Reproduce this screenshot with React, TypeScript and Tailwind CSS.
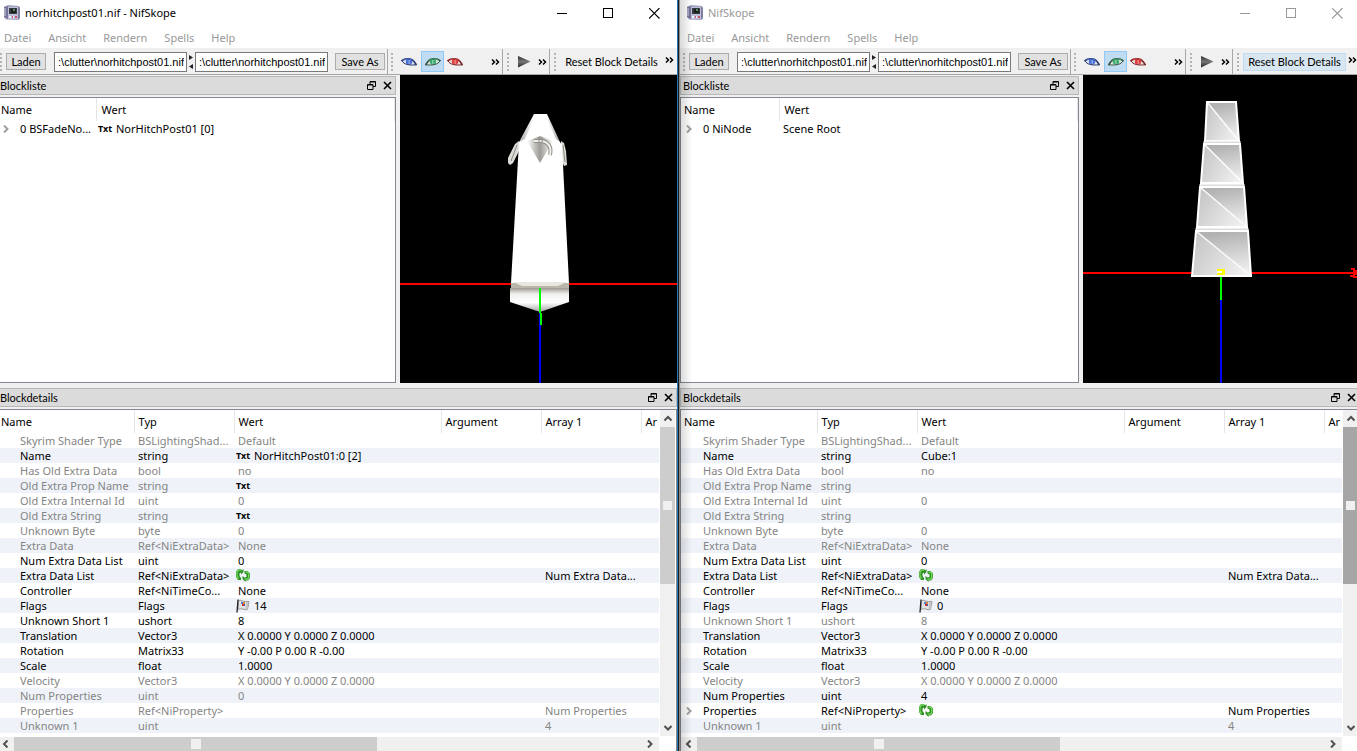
import type { ReactNode } from 'react';

interface DetailRow {
  name: string;
  type: string;
  value?: string;
  icon?: 'txt' | 'link' | 'flag';
  array?: string;
  active?: boolean;
  arrayActive?: boolean;
  expandable?: boolean;
}

interface Block {
  name: string;
  value: string;
  icon?: 'txt';
}

interface NifWindowProps {
  id: string;
  title: string;
  focused: boolean;
  block: Block;
  rows: DetailRow[];
  className: string;
  children: ReactNode;
}

const menus = ['Datei', 'Ansicht', 'Rendern', 'Spells', 'Help'];

const leftRows: DetailRow[] = [
  { name: 'Skyrim Shader Type', type: 'BSLightingShad...', value: 'Default' },
  { name: 'Name', type: 'string', value: 'NorHitchPost01:0 [2]', icon: 'txt', active: true },
  { name: 'Has Old Extra Data', type: 'bool', value: 'no' },
  { name: 'Old Extra Prop Name', type: 'string', icon: 'txt' },
  { name: 'Old Extra Internal Id', type: 'uint', value: '0' },
  { name: 'Old Extra String', type: 'string', icon: 'txt' },
  { name: 'Unknown Byte', type: 'byte', value: '0' },
  { name: 'Extra Data', type: 'Ref<NiExtraData>', value: 'None' },
  { name: 'Num Extra Data List', type: 'uint', value: '0', active: true },
  { name: 'Extra Data List', type: 'Ref<NiExtraData>', icon: 'link', array: 'Num Extra Data...', active: true, arrayActive: true },
  { name: 'Controller', type: 'Ref<NiTimeCo...', value: 'None', active: true },
  { name: 'Flags', type: 'Flags', value: '14', icon: 'flag', active: true },
  { name: 'Unknown Short 1', type: 'ushort', value: '8', active: true },
  { name: 'Translation', type: 'Vector3', value: 'X 0.0000 Y 0.0000 Z 0.0000', active: true },
  { name: 'Rotation', type: 'Matrix33', value: 'Y -0.00 P 0.00 R -0.00', active: true },
  { name: 'Scale', type: 'float', value: '1.0000', active: true },
  { name: 'Velocity', type: 'Vector3', value: 'X 0.0000 Y 0.0000 Z 0.0000' },
  { name: 'Num Properties', type: 'uint', value: '0' },
  { name: 'Properties', type: 'Ref<NiProperty>', array: 'Num Properties' },
  { name: 'Unknown 1', type: 'uint', array: '4' },
];

const rightRows: DetailRow[] = [
  { name: 'Skyrim Shader Type', type: 'BSLightingShad...', value: 'Default' },
  { name: 'Name', type: 'string', value: 'Cube:1', active: true },
  { name: 'Has Old Extra Data', type: 'bool', value: 'no' },
  { name: 'Old Extra Prop Name', type: 'string' },
  { name: 'Old Extra Internal Id', type: 'uint', value: '0' },
  { name: 'Old Extra String', type: 'string' },
  { name: 'Unknown Byte', type: 'byte', value: '0' },
  { name: 'Extra Data', type: 'Ref<NiExtraData>', value: 'None' },
  { name: 'Num Extra Data List', type: 'uint', value: '0', active: true },
  { name: 'Extra Data List', type: 'Ref<NiExtraData>', icon: 'link', array: 'Num Extra Data...', active: true, arrayActive: true },
  { name: 'Controller', type: 'Ref<NiTimeCo...', value: 'None', active: true },
  { name: 'Flags', type: 'Flags', value: '0', icon: 'flag', active: true },
  { name: 'Unknown Short 1', type: 'ushort', value: '8' },
  { name: 'Translation', type: 'Vector3', value: 'X 0.0000 Y 0.0000 Z 0.0000', active: true },
  { name: 'Rotation', type: 'Matrix33', value: 'Y -0.00 P 0.00 R -0.00', active: true },
  { name: 'Scale', type: 'float', value: '1.0000', active: true },
  { name: 'Velocity', type: 'Vector3', value: 'X 0.0000 Y 0.0000 Z 0.0000' },
  { name: 'Num Properties', type: 'uint', value: '4', active: true },
  { name: 'Properties', type: 'Ref<NiProperty>', icon: 'link', array: 'Num Properties', active: true, arrayActive: true, expandable: true },
  { name: 'Unknown 1', type: 'uint', array: '4' },
];

const AppIcon = () => (
  <svg width="16" height="16" viewBox="0 0 16 16">
    <path d="M0 2 4 0 15 1 16 3V13L14 15 2 14.500 0 12Z" fill="#a4a4c4" />
    <path d="M0 2 4 1V14L0 12Z" fill="#74749a" />
    <path d="M4 2H15V14H4Z" fill="#bebed8" />
    <path d="M15 2 16 3V13L14 15V2Z" fill="#7f7f9f" />
    <path d="M0 4h2M0 6h2M0 8h2M0 10h2" stroke="#d5d5e6" />
    <rect x="5" y="3" width="8" height="6" fill="#3a3a44" />
    <rect x="7" y="4" width="5" height="4" fill="#16231a" />
    <path d="M9 4h2v2h-2z" fill="#5d8a66" />
    <path d="M5 12h2M9 12h1" stroke="#f0f0fa" strokeWidth="2" />
    <path d="M8 12h1M11 12h2" stroke="#c9546c" strokeWidth="2" />
  </svg>
);

const Eye = ({ iris, lid, flip }: { iris: string; lid: string; flip?: boolean }) => (
  <svg width="16" height="8" viewBox="0 0 16 8" className={flip ? '-scale-x-100' : ''}>
    <path d="M0.500 3C4 0 10 0 12.500 3L15.500 7C11 7.500 6 7.500 3 5Z" fill="#e4e4e4" />
    <ellipse cx="8" cy="3.800" rx="3.200" ry="3" fill={iris} />
    <path d="M7.500 2h1.500v4h-1.500z" fill="#fff" opacity="0.350" />
    <path d="M0.500 3C4 0 10.500 0 13 3.500L15.500 7" fill="none" stroke={lid} strokeWidth="1.600" />
    <path d="M1 3C3 6.500 8 7.500 15.500 6.800" fill="none" stroke={lid} strokeWidth="1" />
    <path d="M2 2.500C5 0.500 10 0.500 12.500 3" fill="none" stroke={iris} strokeWidth="1" />
  </svg>
);

const PlayIcon = () => (
  <svg width="14" height="14" viewBox="0 0 14 14">
    <defs>
      <linearGradient id="play" x1="0" y1="0" x2="0" y2="1">
        <stop offset="0" stopColor="#2b2b2b" />
        <stop offset="0.500" stopColor="#777" />
        <stop offset="1" stopColor="#222" />
      </linearGradient>
    </defs>
    <path d="M1 1 13.500 6.500 1 12.500Z" fill="url(#play)" />
  </svg>
);

const MoreIcon = () => (
  <svg width="9" height="6" viewBox="0 0 9 6" fill="none" stroke="#000" strokeWidth="1.500">
    <path d="M1 0.500 3.500 3 1 5.500M5 0.500 7.500 3 5 5.500" />
  </svg>
);

const LinkIcon = () => (
  <svg width="14" height="13" viewBox="0 0 14 13">
    <path d="M5 0H2L0 3V8L2 11H5V9L3.500 7V4.500L5 3.500V5.500L7.500 3V0L6 1.500Z" fill="#2f8f25" />
    <path d="M5 1H2.500L1 3.500V7.500L2.500 9.500" fill="none" stroke="#74da5c" strokeWidth="1.300" />
    <path d="M8.500 2H11.500L14 4.500V9L12 11.500H9.500V13L6.500 10V7L8.500 8.500 10.500 8V5.500L8.500 4.500Z" fill="#2f8f25" />
    <path d="M9.500 3.200H11.500L12.700 5V8.500L11.500 10.200H8.500" fill="none" stroke="#74da5c" strokeWidth="1.300" />
  </svg>
);

const FlagIcon = () => (
  <svg width="14" height="14" viewBox="0 0 14 14">
    <path d="M2.500 1.500C5 0.500 8 3.500 13 2.500L11.500 10.500C8 11.500 6 8.500 2 10.500Z" fill="#e2e2e2" stroke="#999" />
    <path d="M10 3.500 12.500 3 11.500 10 9.500 10.500Z" fill="#c4c4c4" />
    <path d="M2 0.500 1 13.500" stroke="#222" strokeWidth="1.300" />
    <rect x="5" y="3" width="2" height="2" fill="#5b77cc" />
    <rect x="7" y="3" width="2" height="2" fill="#e0882c" />
    <rect x="6" y="5" width="2" height="2" fill="#c43434" />
    <rect x="8" y="5" width="1" height="2" fill="#3f5fc4" />
  </svg>
);

const TxtIcon = () => <span className="inline-block w-[18px] text-[9px] font-bold text-black">Txt</span>;

const Chevron = ({ d, className }: { d: string; className?: string }) => (
  <svg width="8" height="8" viewBox="0 0 8 8" fill="none" stroke="currentColor" strokeWidth="2" className={className}>
    <path d={d} />
  </svg>
);

const Grip = () => <div className="mr-1 h-[18px] w-[2px] shrink-0 border-l-2 border-dotted border-[#b4b4b4]" />;

const TitleBar = ({ title, focused }: { title: string; focused: boolean }) => (
  <header className={`flex h-[26px] shrink-0 items-center bg-white pl-[7px] ${focused ? 'text-black' : 'text-[#999]'}`}>
    <AppIcon />
    <h1 className="ml-[5px] flex-1 text-[11px]">{title}</h1>
    <button aria-label="Minimize" className="flex w-[46px] justify-center">
      <svg width="11" height="11" viewBox="0 0 11 11" stroke="currentColor"><path d="M0 5.500h10" /></svg>
    </button>
    <button aria-label="Maximize" className="flex w-[46px] justify-center">
      <svg width="11" height="11" viewBox="0 0 11 11" fill="none" stroke="currentColor"><rect x="0.500" y="0.500" width="9" height="9" /></svg>
    </button>
    <button aria-label="Close" className="flex w-[46px] justify-center">
      <svg width="11" height="11" viewBox="0 0 11 11" fill="none" stroke="currentColor" strokeWidth="1.100"><path d="M0 0 10.500 10.500M10.500 0 0 10.500" /></svg>
    </button>
  </header>
);

const ToolBar = ({ focused }: { focused: boolean }) => (
  <div className="flex h-[27px] shrink-0 items-center border-t border-b border-t-[#f0f0f0] border-b-[#a8a8a8] bg-[#f0f0f0] font-['Lato',sans-serif] text-[11px]">
    <div className="flex h-full items-center border-r border-[#a8a8a8] pr-[2px] pl-[3px]">
      <Grip />
      <button className="h-[17px] w-10 border border-[#adadad] bg-[#e1e1e1] leading-[15px]">Laden</button>
      <input
        aria-label="Load file"
        defaultValue=":\clutter\norhitchpost01.nif"
        className="ml-2 h-5 w-[133px] border border-[#7a7a7a] bg-white pr-[2px] text-right font-['Liberation_Sans',sans-serif]"
      />
      <svg width="8" height="16" viewBox="0 0 8 16" fill="#222">
        <path d="M2 1 6 3.500 2 6ZM6 10 2 12.500 6 15Z" />
      </svg>
      <input
        aria-label="Save file"
        defaultValue=":\clutter\norhitchpost01.nif"
        className="h-5 w-[133px] border border-[#7a7a7a] bg-white pr-[2px] text-right font-['Liberation_Sans',sans-serif]"
      />
      <button className="ml-[7px] h-[17px] w-[50px] border border-[#adadad] bg-[#e1e1e1] leading-[15px]">Save As</button>
    </div>
    <div className="flex h-full items-center border-r border-[#a8a8a8] pl-[3px]">
      <Grip />
      <button aria-label="Front" className="flex h-[21px] w-6 items-center justify-center"><Eye iris="#4a72d8" lid="#27396e" /></button>
      <button aria-label="Side" className="flex h-[21px] w-[23px] items-center justify-center border border-[#90c8f6] bg-[#c0dcf3]">
        <Eye iris="#3fae72" lid="#33523f" flip />
      </button>
      <button aria-label="Top" className="flex h-[21px] w-[22px] items-center justify-center"><Eye iris="#e04040" lid="#7c2323" /></button>
      <button aria-label="More views" className="ml-[23px] flex h-[21px] w-[13px] items-center justify-center"><MoreIcon /></button>
    </div>
    <div className="flex h-full items-center border-r border-[#a8a8a8] pl-1">
      <Grip />
      <button aria-label="Play" className="flex h-[21px] w-[22px] items-center justify-center"><PlayIcon /></button>
      <button aria-label="More animation" className="ml-px flex h-[21px] w-[13px] items-center justify-center"><MoreIcon /></button>
    </div>
    <div className="flex h-full flex-1 items-center pl-1">
      <Grip />
      <button className={`h-[18px] w-[103px] border leading-4 ${focused ? 'border-transparent' : 'border-[#c0dcf3] bg-[#d8e6f1]'}`}>
        Reset Block Details
      </button>
      <button aria-label="More details" className="flex h-[21px] w-[13px] items-center justify-center pb-[3px]"><MoreIcon /></button>
    </div>
  </div>
);

const DockTitle = ({ title }: { title: string }) => (
  <div className="flex h-[19px] shrink-0 items-center border border-[#b8b8b8] bg-[#dbdbdb] pl-[2px]">
    <h2 className="flex-1 font-['Lato',sans-serif] text-[11px] leading-[17px]">{title}</h2>
    <button aria-label={`Float ${title}`} className="flex w-4 justify-center">
      <svg width="9" height="9" viewBox="0 0 9 9" fill="none" stroke="#000">
        <path d="M3 3V0.500H8.500V5.500H6M3 1H8.500M0.500 3.500H6V8.500H0.500ZM0.500 4H6" />
      </svg>
    </button>
    <button aria-label={`Close ${title}`} className="flex w-4 justify-center">
      <svg width="9" height="9" viewBox="0 0 9 9" fill="none" stroke="#000" strokeWidth="1.600"><path d="M1 1 8 8M8 1 1 8" /></svg>
    </button>
  </div>
);

const BlockList = ({ block }: { block: Block }) => (
  <section className="flex w-[399px] shrink-0 flex-col pt-[1px]">
    <DockTitle title="Blockliste" />
    <div className="mt-[2px] flex-1 border border-[#828790] bg-white">
      <table className="w-full table-fixed text-[11px] leading-[15px]">
        <thead>
          <tr className="h-[23px] text-left">
            <th className="w-[98px] border-r border-[#e5e5e5] pl-[3px] font-normal">Name</th>
            <th className="border-r border-[#e5e5e5] pl-[5px] font-normal">Wert</th>
          </tr>
        </thead>
        <tbody>
          <tr className="h-[15px] whitespace-nowrap">
            <td>
              <div className="flex h-[15px] items-center">
                <Chevron d="M2 0.500 5.500 4 2 7.500" className="mr-[10px] ml-1 text-[#a0a0a0]" />
                {block.name}
              </div>
            </td>
            <td className="pl-[2px]">
              <div className="flex h-[15px] items-center">
                {block.icon ? <TxtIcon /> : <span className="w-[2px]" />}
                {block.value}
              </div>
            </td>
          </tr>
        </tbody>
      </table>
    </div>
  </section>
);

const DetailIcon = ({ icon }: { icon: DetailRow['icon'] }) => {
  if (icon === 'txt') return <TxtIcon />;
  if (icon === 'link') return <LinkIcon />;
  if (icon === 'flag') return <span className="mr-1"><FlagIcon /></span>;
  return <span className="w-[2px]" />;
};

const BlockDetails = ({ rows, focused }: { rows: DetailRow[]; focused: boolean }) => (
  <section className="mt-[5px] flex min-h-0 flex-1 flex-col">
    <DockTitle title="Blockdetails" />
    <div className="mt-[2px] flex min-h-0 flex-1 border-t border-r border-l border-[#828790] bg-white pr-px">
      <div className="flex min-w-0 flex-1 flex-col">
        <div className="min-h-0 flex-1 overflow-hidden">
          <table className="w-full table-fixed text-[11px] leading-[15px]">
            <thead>
              <tr className="h-[23px] overflow-hidden text-left whitespace-nowrap [&>th]:font-normal [&>th+th]:border-l [&>th+th]:border-[#e5e5e5] [&>th+th]:pl-1">
                <th className="w-[136px] pl-[3px]">Name</th>
                <th className="w-[100px]">Typ</th>
                <th>Wert</th>
                <th className="w-[100px]">Argument</th>
                <th className="w-[100px]">Array 1</th>
                <th className="w-[18px] overflow-hidden">Ar</th>
              </tr>
            </thead>
            <tbody>
              {rows.map((row) => (
                <tr
                  key={row.name}
                  className={`h-[15px] whitespace-nowrap even:bg-[#eff3f9] ${row.active ? 'text-black' : 'text-[#848484]'}`}
                >
                  <td>
                    <div className="flex items-center">
                      <span className="w-[22px] pl-1">
                        {row.expandable && <Chevron d="M2 0.500 5.500 4 2 7.500" className="text-[#a0a0a0]" />}
                      </span>
                      {row.name}
                    </div>
                  </td>
                  <td className="pl-1">{row.type}</td>
                  <td className="pl-[2px]">
                    <div className="flex h-[15px] items-center">
                      <DetailIcon icon={row.icon} />
                      {row.value}
                    </div>
                  </td>
                  <td />
                  <td className={`pl-1 ${row.arrayActive ? 'text-black' : 'text-[#848484]'}`}>{row.array}</td>
                  <td />
                </tr>
              ))}
            </tbody>
          </table>
        </div>
        <div className="flex h-[14px] shrink-0 items-center bg-[#f0f0f0] text-[#505050]">
          <span className="flex w-4 justify-center"><Chevron d="M5.500 0.500 2 4 5.500 7.500" /></span>
          <div className="flex h-full w-[363px] items-center justify-center bg-[#cdcdcd]">
            <span className="size-[10px] bg-[#f0f0f0]" />
          </div>
          <span className="ml-auto flex w-[18px] justify-center"><Chevron d="M2 0.500 5.500 4 2 7.500" /></span>
        </div>
      </div>
      <div className="mb-[15px] ml-px flex w-[15px] shrink-0 flex-col items-center bg-[#f0f0f0] text-[#505050]">
        <span className="flex h-[17px] items-center"><Chevron d="M0.500 5.500 4 2 7.500 5.500" /></span>
        <div className={`flex h-[157px] w-full items-center justify-center ${focused ? 'bg-[#cdcdcd]' : 'bg-[#a6a6a6]'}`}>
          <span className="size-[9px] bg-[#f0f0f0]" />
        </div>
        <span className="mt-auto flex h-[17px] items-center"><Chevron d="M0.500 2 4 5.500 7.500 2" /></span>
      </div>
    </div>
  </section>
);

const HitchPostView = () => (
  <svg viewBox="0 0 277 308" preserveAspectRatio="xMinYMin slice" className="size-full" role="img" aria-label="Hitch post">
    <defs>
      <linearGradient id="notch" x1="0" y1="0" x2="1" y2="0">
        <stop offset="0" stopColor="#fff" />
        <stop offset="0.500" stopColor="#9d9b95" />
        <stop offset="1" stopColor="#fff" />
      </linearGradient>
      <linearGradient id="shoulder" x1="0" y1="0" x2="1" y2="0">
        <stop offset="0" stopColor="#a8a8a8" />
        <stop offset="0.350" stopColor="#fff" />
        <stop offset="0.650" stopColor="#fff" />
        <stop offset="1" stopColor="#a8a8a8" />
      </linearGradient>
      <linearGradient id="foot" x1="0" y1="0" x2="0" y2="1">
        <stop offset="0" stopColor="#9c9a90" />
        <stop offset="0.250" stopColor="#f0f0ee" />
        <stop offset="0.600" stopColor="#fff" />
        <stop offset="1" stopColor="#a5a5a5" />
      </linearGradient>
    </defs>
    <path d="M0 209H277" stroke="#f00" strokeWidth="2" />
    <g>
      <path d="M119 66 115 69 108 83V88L110 90 113 88 119 76Z" fill="#dcdcd8" />
      <path d="M117 70 111 86" stroke="#8b8a84" />
      <path d="M161 66 164 68 166 76 167 90 164 91 161 84Z" fill="#dcdcd8" />
      <path d="M163 70 165 87" stroke="#8b8a84" />
    </g>
    <path d="M134 39H147L160 67H119Z" fill="url(#shoulder)" />
    <path d="M136 39H145L156 64 160 67 162 70 169 208H111L119 67 125 64Z" fill="#fff" />
    <path d="M111 208H169V213H111Z" fill="#b9b7ab" />
    <path d="M113 207H167L158 211H122Z" fill="#e9e7df" />
    <path d="M110 213H169V227L140 237 110 227Z" fill="url(#foot)" />
    <path d="M127 66 140 61 153 66 140 88Z" fill="url(#notch)" />
    <path d="M134 66H142C148 67 152 72 150 80" fill="none" stroke="#8f8d86" strokeWidth="4" />
    <path d="M134 66H142C148 67 152 72 150 80" fill="none" stroke="#f0f0ec" strokeWidth="2" />
    <path d="M139 62V67M142 62V67" stroke="#8c8b85" />
    <path d="M140 238V308" stroke="#00f" strokeWidth="2" />
    <path d="M140 213V238M141 238V250" stroke="#0f0" strokeWidth="2" />
  </svg>
);

// x/y of the four corners of every cube, top to bottom
const cubes = [
  { top: 27, bottom: 66, tl: 124, tr: 153, bl: 122, br: 156 },
  { top: 69, bottom: 108, tl: 121, tr: 157, bl: 118, br: 160 },
  { top: 112, bottom: 152, tl: 117, tr: 161, bl: 114, br: 164 },
  { top: 156, bottom: 201, tl: 113, tr: 165, bl: 109, br: 168 },
];

const CubeStackView = () => (
  <svg viewBox="0 0 277 308" preserveAspectRatio="xMinYMin slice" className="size-full" role="img" aria-label="Cube stack">
    <defs>
      <linearGradient id="cubeUpper" x1="0.700" y1="0" x2="0.900" y2="1">
        <stop offset="0" stopColor="#b2b2b2" />
        <stop offset="1" stopColor="#f6f6f6" />
      </linearGradient>
      <linearGradient id="cubeLower" x1="0" y1="0.300" x2="1" y2="0.800">
        <stop offset="0" stopColor="#c6c6c6" />
        <stop offset="1" stopColor="#f2f2f2" />
      </linearGradient>
    </defs>
    <path d="M0 198H277" stroke="#f00" strokeWidth="2" />
    <path d="M268 194H271V196H277M267 201H271V202H277M270 199H277" fill="none" stroke="#f00" strokeWidth="2" />
    {cubes.map((c) => (
      <g key={c.top}>
        {c.top > 27 && <path d={`M${c.tl} ${c.top - 3}H${c.tr}V${c.top}H${c.tl}Z`} fill="#dcdcdc" stroke="#fff" />}
        <path d={`M${c.tl} ${c.top}H${c.tr}L${c.br} ${c.bottom}Z`} fill="url(#cubeUpper)" />
        <path d={`M${c.tl} ${c.top}L${c.br} ${c.bottom}H${c.bl}Z`} fill="url(#cubeLower)" />
        <path d={`M${c.tl} ${c.top}L${c.br} ${c.bottom}`} stroke="#fff" strokeWidth="1.300" />
        <path d={`M${c.tl} ${c.top}H${c.tr}L${c.br} ${c.bottom}H${c.bl}Z`} fill="none" stroke="#fff" strokeWidth="2" />
      </g>
    ))}
    <path d="M134 194H142V200H134Z" fill="#ff0" />
    <path d="M134 197H139" stroke="#fff" strokeWidth="2" />
    <path d="M138 202V225" stroke="#0f0" strokeWidth="2" />
    <path d="M138 225V308" stroke="#00f" strokeWidth="2" />
  </svg>
);

const NifWindow = ({ id, title, focused, block, rows, className, children }: NifWindowProps) => (
  <div id={id} className={`flex min-w-0 flex-1 flex-col bg-[#f0f0f0] ${className}`}>
    <TitleBar title={title} focused={focused} />
    <nav className="flex h-[22px] shrink-0 items-center gap-[17px] bg-white pt-[2px] pl-[7px] text-[11px] text-[#999]">
      {menus.map((menu) => (
        <button key={menu}>{menu}</button>
      ))}
    </nav>
    <ToolBar focused={focused} />
    <div className="flex h-[308px] shrink-0">
      <BlockList block={block} />
      <div className="ml-1 min-w-0 flex-1 overflow-hidden bg-black">{children}</div>
    </div>
    <BlockDetails rows={rows} focused={focused} />
  </div>
);

const App = () => {
  return (
    <main className="flex h-screen overflow-hidden bg-[#f0f0f0] font-['Noto_Sans',sans-serif] text-black">
      <div className="flex min-w-0 flex-1 overflow-hidden">
        <NifWindow
          id="nif-left"
          title="norhitchpost01.nif - NifSkope"
          focused
          block={{ name: '0 BSFadeNo...', value: 'NorHitchPost01 [0]', icon: 'txt' }}
          rows={leftRows}
          className="-ml-[3px]"
        >
          <HitchPostView />
        </NifWindow>
      </div>
      <div className="w-[3px] shrink-0 border-r border-l border-r-[#8a8a8a] border-l-[#2377b8] bg-[#1c1c1c]" />
      <div className="relative flex min-w-0 flex-1 overflow-hidden">
        <NifWindow
          id="nif-right"
          title="NifSkope"
          focused={false}
          block={{ name: '0 NiNode', value: 'Scene Root' }}
          rows={rightRows}
          className="-mr-[3px]"
        >
          <CubeStackView />
        </NifWindow>
        {/* drop shadow of the focused window */}
        <div className="pointer-events-none absolute inset-y-0 left-0 w-3 bg-linear-to-r from-black/15 to-transparent" />
      </div>
    </main>
  );
};

export default App;
